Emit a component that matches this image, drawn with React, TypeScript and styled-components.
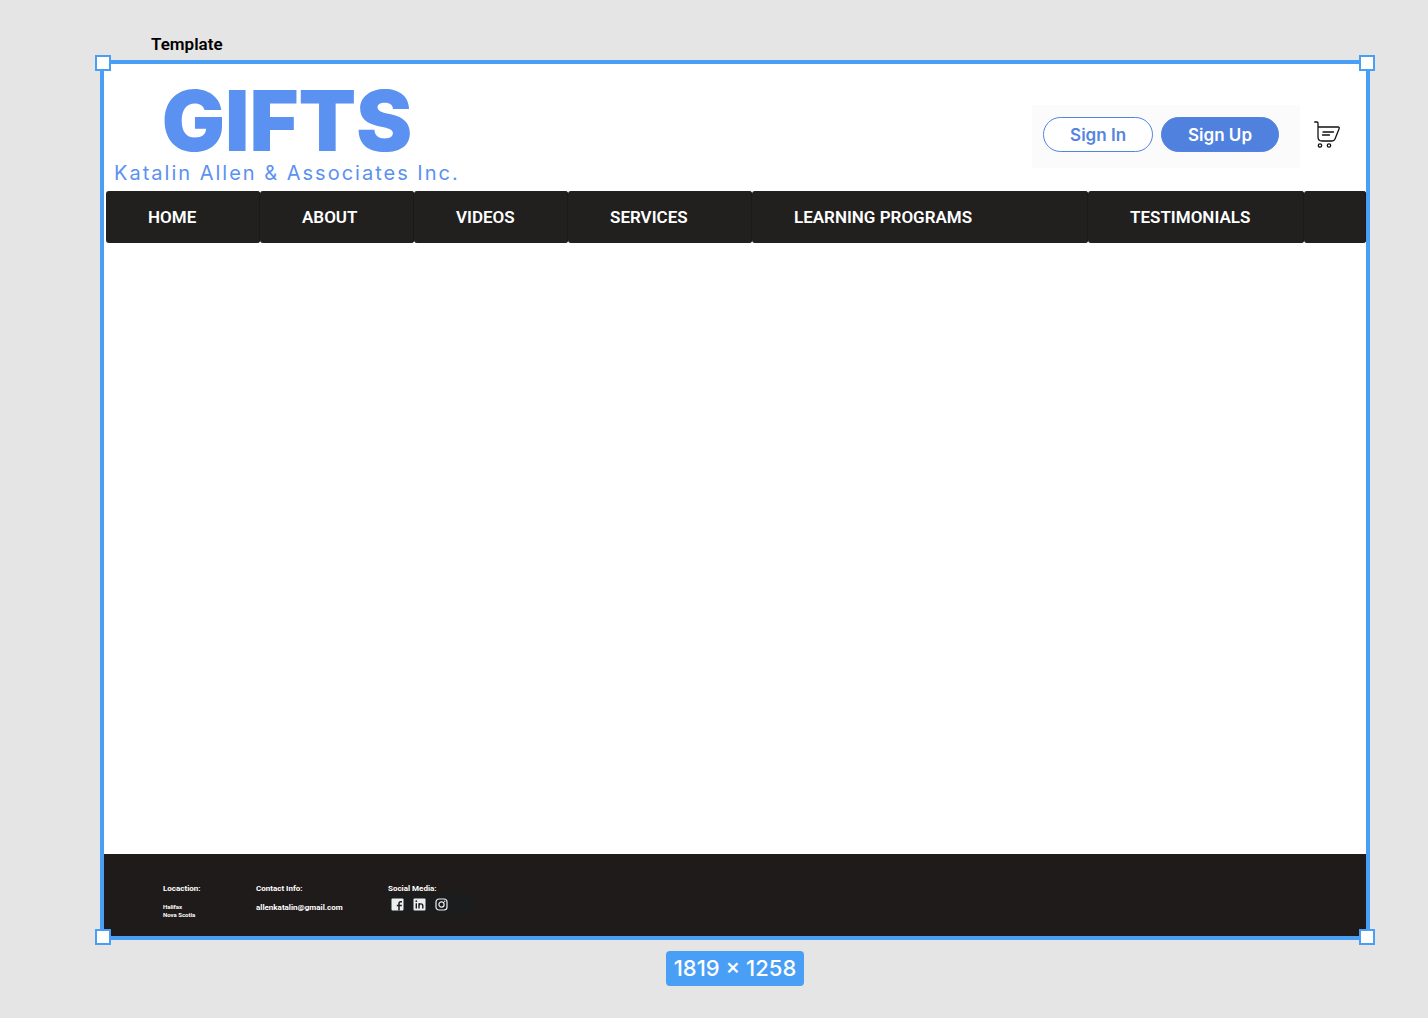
import React from "react";
import styled, { createGlobalStyle } from "styled-components";

const accent = "#489ff5";
const brand = "#5b91f0";

const GlobalStyle = createGlobalStyle`
  *, *::before, *::after { box-sizing: border-box; }
  body { margin: 0; background: #e5e5e5; font-family: Roboto, "Liberation Sans", sans-serif; }
  h1, h2, p, ul { margin: 0; padding: 0; }
  a { color: inherit; text-decoration: none; }
`;

const Workspace = styled.div`
  min-height: 100vh;
  display: flex;
  flex-direction: column;
  padding: 34px 58px 32px 100px;
`;

const FrameName = styled.h2`
  height: 26px;
  padding-left: 51px;
  font-size: 17px;
  line-height: 20px;
  font-weight: 600;
  color: #000;
`;

const Frame = styled.section`
  position: relative;
  flex: 1;
  display: flex;
  flex-direction: column;
  border: 4px solid ${accent};
  background: #fff;
`;

const Handle = styled.span<{ $v: "top" | "bottom"; $h: "left" | "right" }>`
  position: absolute;
  ${(p) => p.$v}: -9px;
  ${(p) => p.$h}: -9px;
  width: 16px;
  height: 16px;
  border: 2px solid ${accent};
  background: #fff;
`;

const Header = styled.header`
  display: flex;
  align-items: flex-start;
  justify-content: space-between;
  height: 127px;
  padding: 17px 26px 0 10px;
`;

const Logo = styled.a`
  display: flex;
  flex-direction: column;
  align-items: center;
  color: ${brand};
  font-family: Inter, "Liberation Sans", sans-serif;
`;

const LogoName = styled.span`
  font-size: 84px;
  line-height: 80px;
  font-weight: 900;
`;

const LogoTagline = styled.span`
  font-size: 20px;
  line-height: 24px;
  font-weight: 400;
  letter-spacing: 2px;
`;

const Actions = styled.div`
  display: flex;
  align-items: center;
  gap: 14px;
  padding-top: 24px;
`;

const AuthPanel = styled.div`
  display: flex;
  gap: 8px;
  padding: 12px 21px 16px 11px;
  background: #fbfbfc;
`;

const AuthButton = styled.button<{ $filled?: boolean }>`
  height: 35px;
  padding: 0 26px;
  border: 1px solid #5183df;
  border-radius: 18px;
  background: ${(p) => (p.$filled ? "#5081df" : "#fff")};
  color: ${(p) => (p.$filled ? "#fff" : "#5585df")};
  font: 600 17px/32px Inter, "Liberation Sans", sans-serif;
`;

const CartButton = styled.button`
  display: flex;
  padding: 0 0 4px;
  border: 0;
  background: none;
  color: #111;
`;

const Nav = styled.nav`
  display: grid;
  grid-template-columns: 154fr 154fr 154fr 184fr 336fr 216fr 62fr;
  height: 52px;
  padding-left: 2px;
`;

const NavCell = styled.div`
  display: flex;
  align-items: center;
  padding-left: 42px;
  border-radius: 3px;
  background: #221f1f;
  box-shadow: inset -1px 0 #1b1818;
  color: #fff;
  font-size: 17px;
  line-height: 20px;
  font-weight: 600;
  white-space: nowrap;
`;

const Content = styled.main`
  flex: 1;
`;

const Footer = styled.footer`
  display: flex;
  height: 82px;
  padding: 30px 59px 0;
  background: #1f1b1b;
  color: #fff;
  font-weight: 700;
`;

const FooterColumn = styled.div<{ $width: number }>`
  width: ${(p) => p.$width}px;
`;

const FooterTitle = styled.h2`
  font-size: 8px;
  line-height: 10px;
`;

const Address = styled.p`
  padding-top: 9px;
  font-size: 6px;
  line-height: 8px;
`;

const Email = styled.a`
  display: block;
  padding-top: 9px;
  font-size: 8px;
  line-height: 10px;
`;

const Socials = styled.div`
  display: flex;
  align-items: center;
  gap: 9px;
  height: 20px;
  padding: 0 3px;
  background: #1b1c1e;
  color: #eee;
`;

const SocialLink = styled.a`
  display: flex;
`;

const SizeBadge = styled.output`
  align-self: center;
  margin-top: 11px;
  padding: 0 8px;
  border-radius: 4px;
  background: ${accent};
  color: #fff;
  font: 500 22px/35px Inter, "Liberation Sans", sans-serif;
`;

const pages = ["HOME", "ABOUT", "VIDEOS", "SERVICES", "LEARNING PROGRAMS", "TESTIMONIALS"];

function CartIcon() {
  return (
    <svg width="26" height="27" viewBox="0 0 26 27" fill="none" stroke="currentColor" strokeWidth="1.3" strokeLinecap="round" strokeLinejoin="round">
      <path d="M.7 1H3q1 0 1 1v14q0 4 4 4h10q2.200 0 3-2l4-10q.8-2-1-2H4M9 11h10.500M8.500 14h7" />
      <circle cx="6" cy="24.500" r="1.700" />
      <circle cx="15" cy="24.500" r="1.700" />
    </svg>
  );
}

function FacebookIcon() {
  return (
    <svg width="13" height="13" viewBox="0 0 13 13">
      <rect x=".5" y=".5" width="12" height="12" rx="1" fill="currentColor" />
      <path d="M8 12.500V5.500q0-1.700 1.700-1.700H11M5.800 7.500h5" fill="none" stroke="#1b1c1e" strokeWidth="1.500" />
    </svg>
  );
}

function LinkedInIcon() {
  return (
    <svg width="13" height="13" viewBox="0 0 13 13">
      <rect x=".5" y=".5" width="12" height="12" rx="1" fill="currentColor" />
      <path d="M3.300 5.200v5.300M6 10.500V5.200m0 2.600q0-1.900 1.900-1.900t1.900 1.900v2.700" fill="none" stroke="#1b1c1e" strokeWidth="1.400" />
      <circle cx="3.300" cy="3.200" r=".9" fill="#1b1c1e" />
    </svg>
  );
}

function InstagramIcon() {
  return (
    <svg width="13" height="13" viewBox="0 0 13 13" fill="none" stroke="currentColor" strokeWidth="1.200">
      <rect x="1" y="1" width="11" height="11" rx="3" />
      <circle cx="6.500" cy="6.500" r="2.600" />
      <circle cx="9.700" cy="3.300" r=".7" fill="currentColor" stroke="none" />
    </svg>
  );
}

export default function App() {
  return (
    <>
      <GlobalStyle />
      <Workspace>
        <FrameName>Template</FrameName>
        <Frame>
          <Header>
            <Logo href="#home">
              <LogoName>GIFTS</LogoName>
              <LogoTagline>Katalin Allen &amp; Associates Inc.</LogoTagline>
            </Logo>
            <Actions>
              <AuthPanel>
                <AuthButton type="button">Sign In</AuthButton>
                <AuthButton type="button" $filled>Sign Up</AuthButton>
              </AuthPanel>
              <CartButton type="button" aria-label="Cart"><CartIcon /></CartButton>
            </Actions>
          </Header>
          <Nav>
            {pages.map((page) => (
              <NavCell key={page}><a href={"#" + page.toLowerCase().replace(" ", "-")}>{page}</a></NavCell>
            ))}
            <NavCell />
          </Nav>
          <Content />
          <Footer>
            <FooterColumn $width={93}>
              <FooterTitle>Locaction:</FooterTitle>
              <Address>Halifax<br />Nova Scotia</Address>
            </FooterColumn>
            <FooterColumn $width={132}>
              <FooterTitle>Contact Info:</FooterTitle>
              <Email href="mailto:allenkatalin@gmail.com">allenkatalin@gmail.com</Email>
            </FooterColumn>
            <FooterColumn $width={86}>
              <FooterTitle>Social Media:</FooterTitle>
              <Socials>
                <SocialLink href="#facebook" aria-label="Facebook"><FacebookIcon /></SocialLink>
                <SocialLink href="#linkedin" aria-label="LinkedIn"><LinkedInIcon /></SocialLink>
                <SocialLink href="#instagram" aria-label="Instagram"><InstagramIcon /></SocialLink>
              </Socials>
            </FooterColumn>
          </Footer>
          <Handle $v="top" $h="left" />
          <Handle $v="top" $h="right" />
          <Handle $v="bottom" $h="left" />
          <Handle $v="bottom" $h="right" />
        </Frame>
        <SizeBadge>1819 × 1258</SizeBadge>
      </Workspace>
    </>
  );
}
